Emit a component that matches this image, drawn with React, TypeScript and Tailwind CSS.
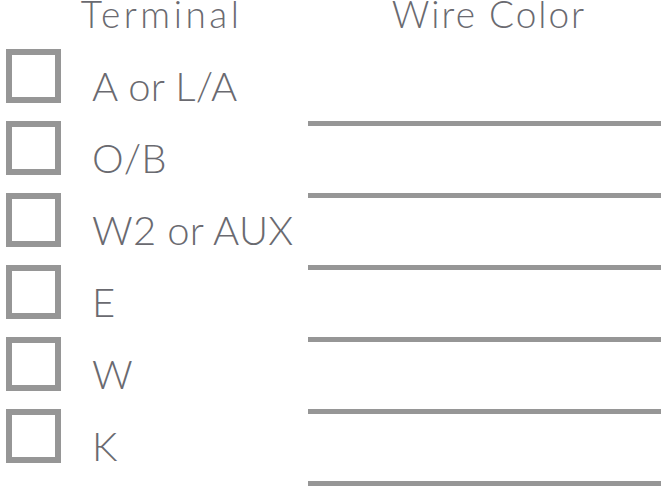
import React from "react";

const rows = ["A or L/A", "O/B", "W2 or AUX", "E", "W", "K"];

export default function App() {
  return (
    <div
      className="w-[661px] h-[489px] bg-white overflow-hidden text-[#6a6a70]"
      style={{ fontFamily: "Lato, 'Open Sans', sans-serif" }}
    >
      <div className="flex h-[49px]">
        <div className="w-[308px] flex justify-center pl-[15px]">
          <span className="text-[37px] font-light leading-[37px] tracking-[3.5px] -mt-[5px]">Terminal</span>
        </div>
        <div className="flex-1 flex justify-center pl-[9px]">
          <span className="text-[37px] font-light leading-[37px] tracking-[2px] -mt-[5px]">Wire Color</span>
        </div>
      </div>
      <div className="flex">
        <div className="w-[308px] flex flex-col">
          {rows.map((r) => (
            <div key={r} className="h-[72px] flex items-start pl-[6px]">
              <div className="w-[55px] h-[54px] border-[6px] border-[#969696] shrink-0" />
              <span className="ml-[31px] text-[40px] font-light leading-[40px] tracking-[0.2px] mt-[17px] whitespace-nowrap">
                {r}
              </span>
            </div>
          ))}
        </div>
        <div className="flex-1 flex flex-col pt-[5px]">
          {rows.map((r) => (
            <div key={r} className="h-[72px] border-b-[5px] border-[#969696]" />
          ))}
        </div>
      </div>
    </div>
  );
}
